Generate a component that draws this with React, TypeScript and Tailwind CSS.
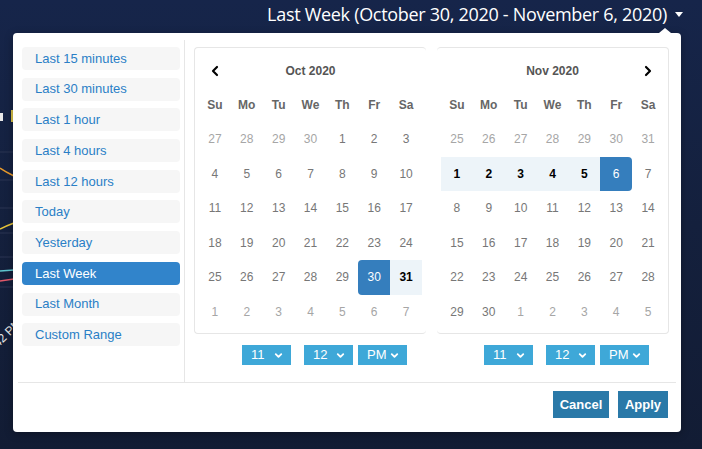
import { ChevronDown, ChevronLeft, ChevronRight } from "lucide-react";

type Day = { d: number; off?: boolean; start?: boolean; end?: boolean; range?: boolean };

const ranges = [
  "Last 15 minutes",
  "Last 30 minutes",
  "Last 1 hour",
  "Last 4 hours",
  "Last 12 hours",
  "Today",
  "Yesterday",
  "Last Week",
  "Last Month",
  "Custom Range",
];

const weekDays = ["Su", "Mo", "Tu", "We", "Th", "Fr", "Sa"];

const octDays: Day[] = [
  ...[27, 28, 29, 30].map((d) => ({ d, off: true })),
  ...Array.from({ length: 31 }, (_, i) => ({
    d: i + 1,
    start: i + 1 === 30,
    range: i + 1 === 31,
  })),
  ...[1, 2, 3, 4, 5, 6, 7].map((d) => ({ d, off: true })),
];

const novDays: Day[] = [
  ...[25, 26, 27, 28, 29, 30, 31].map((d) => ({ d, off: true })),
  ...Array.from({ length: 30 }, (_, i) => ({
    d: i + 1,
    range: i + 1 < 6,
    end: i + 1 === 6,
  })),
  ...[1, 2, 3, 4, 5].map((d) => ({ d, off: true })),
];

const dayClass = (day: Day) => {
  if (day.start) return "bg-[#357ebd] text-white rounded-l-[4px]";
  if (day.end) return "bg-[#357ebd] text-white rounded-r-[4px]";
  if (day.range) return "bg-[#edf4f9] text-black font-bold";
  if (day.off) return "text-[#a6a6a6]";
  return "text-[#777]";
};

const TimeSelect = ({ value, className }: { value: string; className?: string }) => (
  <div
    className={`flex items-center justify-between h-[20px] w-[49px] pl-[9px] pr-[7px] bg-[#3ea8d8] text-white text-[13px] ${className ?? ""}`}
  >
    <span>{value}</span>
    <ChevronDown size={11} strokeWidth={4} />
  </div>
);

const Calendar = ({
  title,
  days,
  side,
}: {
  title: string;
  days: Day[];
  side: "left" | "right";
}) => (
  <div className="flex flex-col">
    <div
      className={`w-[232px] h-[287px] pt-[5px] px-[4px] border-[#e6e6e6] rounded-[4px] ${
        side === "left" ? "border-l border-t border-b" : "border-r border-t border-b"
      }`}
    >
      <div className="grid grid-cols-7 h-[35px] items-center text-center">
        <div className="flex justify-center">
          {side === "left" && <ChevronLeft size={16} strokeWidth={3.2} className="text-black" />}
        </div>
        <div className="col-span-5 text-[12px] font-bold text-[#555]">{title}</div>
        <div className="flex justify-center">
          {side === "right" && <ChevronRight size={16} strokeWidth={3.2} className="text-black" />}
        </div>
      </div>
      <div className="grid grid-cols-7 h-[34px] items-center text-center text-[12px] font-bold text-[#666]">
        {weekDays.map((w) => (
          <div key={w}>{w}</div>
        ))}
      </div>
      <div className="grid grid-cols-7 text-center text-[12px]">
        {days.map((day, i) => (
          <div
            key={i}
            className={`h-[34.5px] flex items-center justify-center ${dayClass(day)}`}
          >
            {day.d}
          </div>
        ))}
      </div>
    </div>
    <div className={`flex items-center mt-[11px] ${side === "left" ? "pl-[48px]" : "pl-[47px]"}`}>
      <TimeSelect value="11" />
      <TimeSelect value="12" className="ml-[13px]" />
      <TimeSelect value="PM" className="ml-[5px] w-[48px]" />
    </div>
  </div>
);

const ChartBehind = () => (
  <svg className="absolute left-0 top-0" width="20" height="449" viewBox="0 0 20 449">
    {[152, 180, 208, 233, 257, 287].map((y) => (
      <line key={y} x1="0" y1={y} x2="20" y2={y} stroke="#2a3552" strokeWidth="1" />
    ))}
    <rect x="11" y="110" width="3" height="12" fill="#d8c24a" />
    <rect x="0" y="113" width="3" height="8" fill="#e8e8e8" />
    <path d="M0 168 Q6 172 14 176" stroke="#e89a2c" strokeWidth="1.5" fill="none" />
    <path d="M0 229 Q6 226 14 223" stroke="#e7c43a" strokeWidth="1.5" fill="none" />
    <path d="M0 271 L14 270" stroke="#5fc7d0" strokeWidth="1.5" fill="none" />
    <path d="M0 281 L14 279" stroke="#e0596a" strokeWidth="1.5" fill="none" />
    <text
      x="0"
      y="0"
      fill="#e8e8e8"
      fontSize="12"
      fontFamily="'Liberation Sans', Arial, sans-serif"
      transform="translate(-2 348) rotate(-45)"
    >
      42 PM
    </text>
  </svg>
);

export default function App() {
  return (
    <div className="relative w-[702px] h-[449px] overflow-hidden bg-gradient-to-b from-[#16254a] via-[#14203d] to-[#121c34] font-['Liberation_Sans',Arial,sans-serif]">
      <ChartBehind />

      <div className="flex justify-end items-center h-[28px] pr-[19px] font-['Open_Sans',sans-serif] text-[18px] tracking-[-0.3px] text-white">
        <span>Last Week (October 30, 2020 - November 6, 2020)</span>
        <span className="ml-[8px] mt-[1px] w-0 h-0 border-l-[4px] border-r-[4px] border-t-[5px] border-l-transparent border-r-transparent border-t-white" />
      </div>

      <div className="absolute left-[13px] top-[33px] w-[668px] h-[399px] bg-white rounded-[4px] shadow-[0_2px_8px_rgba(0,0,0,0.3)]">
        <span className="absolute -top-[5px] right-[10px] w-0 h-0 border-l-[6px] border-r-[6px] border-b-[5px] border-l-transparent border-r-transparent border-b-white" />

        <div className="flex pt-[7px] h-[349px]">
          <div className="w-[172px] shrink-0 pl-[9px] pr-[4px] pt-[7px] border-r border-[#e6e6e6] flex flex-col gap-[7.7px]">
            {ranges.map((r) => (
              <div
                key={r}
                className={`h-[23px] w-[158px] flex items-center pl-[13px] text-[13px] rounded-[4px] ${
                  r === "Last Week" ? "bg-[#3184cb] text-white" : "bg-[#f6f6f6] text-[#2a7fc6]"
                }`}
              >
                {r}
              </div>
            ))}
          </div>

          <div className="flex pl-[9px] pt-[7px] gap-[11px]">
            <Calendar title="Oct 2020" days={octDays} side="left" />
            <Calendar title="Nov 2020" days={novDays} side="right" />
          </div>
        </div>

        <div className="mx-[5px] border-t border-[#e6e6e6] flex justify-end gap-[9px] pt-[8px] pr-[8px]">
          <button className="h-[27px] w-[56px] bg-[#2a79a8] text-white text-[13px] font-bold">
            Cancel
          </button>
          <button className="h-[27px] w-[50px] bg-[#2a79a8] text-white text-[13px] font-bold">
            Apply
          </button>
        </div>
      </div>
    </div>
  );
}
